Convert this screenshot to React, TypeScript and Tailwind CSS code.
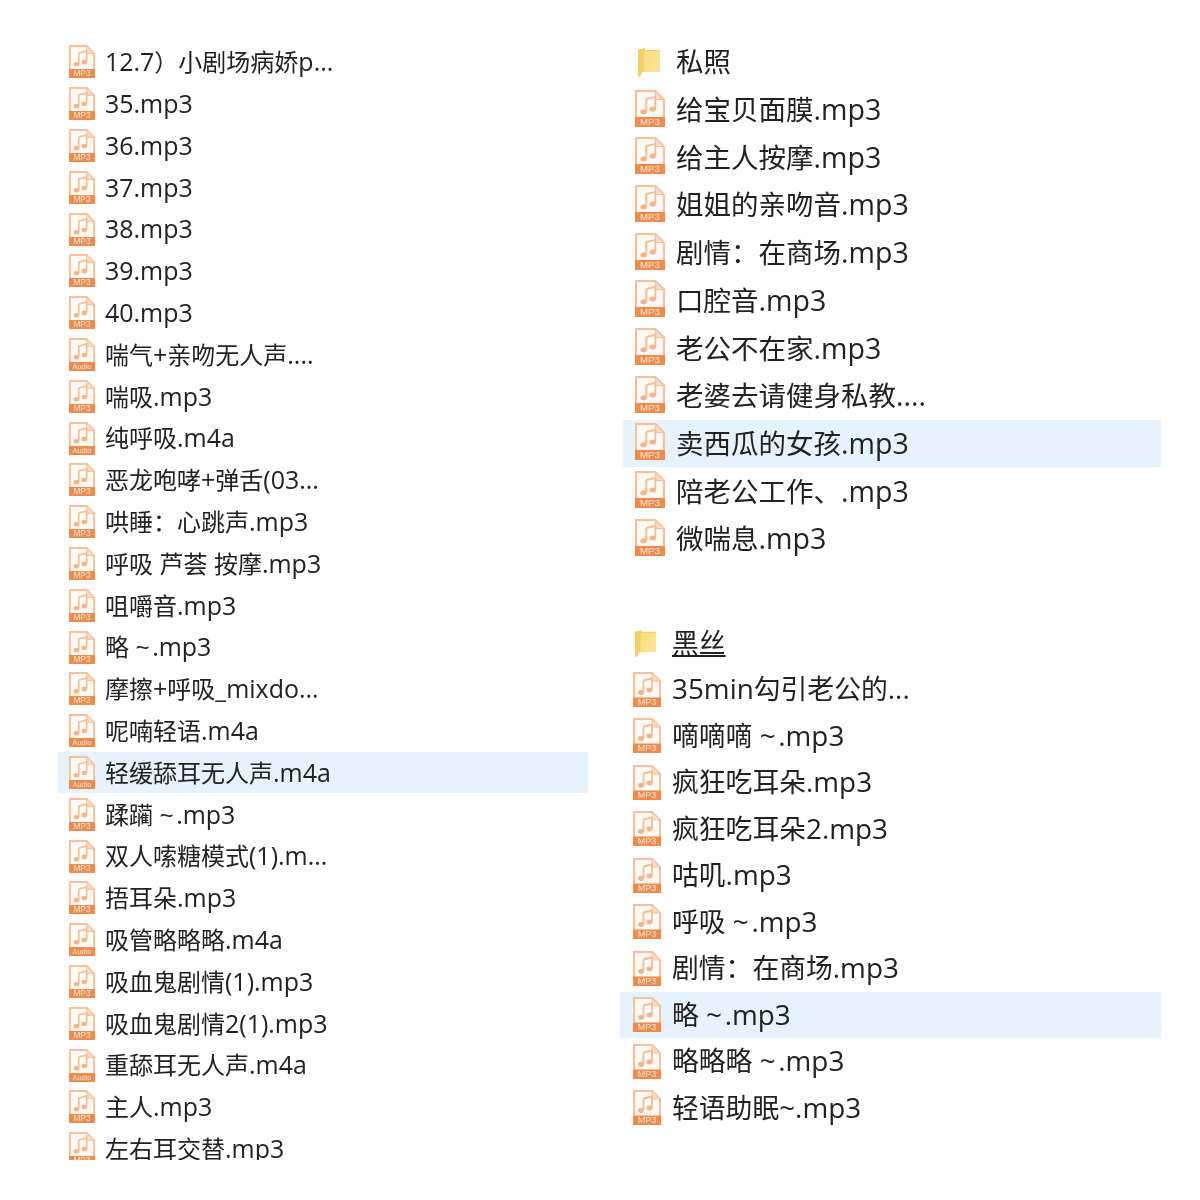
const leftFiles = [
  '12.7）小剧场病娇p...',
  '35.mp3',
  '36.mp3',
  '37.mp3',
  '38.mp3',
  '39.mp3',
  '40.mp3',
  '喘气+亲吻无人声....',
  '喘吸.mp3',
  '纯呼吸.m4a',
  '恶龙咆哮+弹舌(03...',
  '哄睡：心跳声.mp3',
  '呼吸 芦荟 按摩.mp3',
  '咀嚼音.mp3',
  '略 ~\u200a.mp3',
  '摩擦+呼吸_mixdo...',
  '呢喃轻语.m4a',
  '轻缓舔耳无人声.m4a',
  '蹂躏 ~\u200a.mp3',
  '双人嗦糖模式(1).m...',
  '捂耳朵.mp3',
  '吸管略略略.m4a',
  '吸血鬼剧情(1).mp3',
  '吸血鬼剧情2(1).mp3',
  '重舔耳无人声.m4a',
  '主人.mp3',
  '左右耳交替.mp3',
]

const privateFiles = [
  '给宝贝面膜.mp3',
  '给主人按摩.mp3',
  '姐姐的亲吻音.mp3',
  '剧情：在商场.mp3',
  '口腔音.mp3',
  '老公不在家.mp3',
  '老婆去请健身私教....',
  '卖西瓜的女孩.mp3',
  '陪老公工作、.mp3',
  '微喘息.mp3',
]

const silkFiles = [
  '35min勾引老公的...',
  '嘀嘀嘀 ~\u200a.mp3',
  '疯狂吃耳朵.mp3',
  '疯狂吃耳朵2.mp3',
  '咕叽.mp3',
  '呼吸 ~\u200a.mp3',
  '剧情：在商场.mp3',
  '略 ~\u200a.mp3',
  '略略略 ~\u200a.mp3',
  '轻语助眠~.mp3',
]

const fontStack = "font-['Open_Sans','Noto_Sans_CJK_SC',sans-serif]"

function AudioIcon({ className, label }: { className: string; label: string }) {
  return (
    <svg viewBox="0 0 28 35" className={className} preserveAspectRatio="none">
      <path d="M1 1H19L27 9V27H1Z" fill="#fffaf6" stroke="#f7c09a" strokeWidth="2" />
      <path d="M19 1V9H27Z" fill="#fbdcc4" stroke="#f7c09a" strokeWidth="1" />
      <path d="M10.5 8.5L19 6.5V17.5" fill="none" stroke="#f7bd95" strokeWidth="1.8" />
      <path d="M10.5 8.5V20" fill="none" stroke="#f7bd95" strokeWidth="1.8" />
      <ellipse cx="8" cy="20.5" rx="3" ry="2.4" fill="#f6b487" />
      <ellipse cx="16.5" cy="18" rx="3" ry="2.4" fill="#f6b487" />
      <rect x="0" y="25.5" width="28" height="9.5" fill="#f18a4a" />
      <text
        x="14"
        y="33.4"
        textAnchor="middle"
        fontSize={label === 'MP3' ? 9 : 8}
        fill="#ffe9da"
        fontFamily="Liberation Sans, sans-serif"
      >
        {label}
      </text>
    </svg>
  )
}

function FolderIcon({ className }: { className: string }) {
  return (
    <svg viewBox="0 0 23 30" className={className} preserveAspectRatio="none">
      <defs>
        <linearGradient id="folderFront" x1="0" y1="0" x2="1" y2="1">
          <stop offset="0" stopColor="#f9da78" />
          <stop offset="1" stopColor="#fbe69f" />
        </linearGradient>
      </defs>
      <path d="M1 3L8 1V3H22C22.6 3 23 3.4 23 4V24.5L5 25 3 30 1 29Z" fill="#f6cf62" />
      <path d="M7 4H23V24.5H5.5L3 29.5 7 22Z" fill="url(#folderFront)" />
    </svg>
  )
}

// latin runs sit a touch larger than the cjk ones in the original
function FileName({ name }: { name: string }) {
  return (
    <>
      {name.split(/([\x00-\x7f]+)/).map((part, i) =>
        i % 2 === 1 ? (
          <span key={i} className="text-[1.04em]">
            {part}
          </span>
        ) : (
          part
        ),
      )}
    </>
  )
}

function LeftRow({ name, selected }: { name: string; selected?: boolean }) {
  const label = name.endsWith('m4a') || name.startsWith('喘气') ? 'Audio' : 'MP3'
  return (
    <div className={selected ? 'flex h-[41.8px] items-center bg-[#e5f3ff] pl-[11px]' : 'flex h-[41.8px] items-center pl-[11px]'}>
      <AudioIcon className="h-[33px] w-[26px] shrink-0" label={label} />
      <span className="ml-[10px] whitespace-nowrap text-[24px] text-[#222]">
        <FileName name={name} />
      </span>
    </div>
  )
}

function PrivateRow({ name, selected }: { name: string; selected?: boolean }) {
  return (
    <div className={selected ? 'flex h-[47.7px] items-center bg-[#e5f3ff] pl-[12px]' : 'flex h-[47.7px] items-center pl-[12px]'}>
      <AudioIcon className="-mt-[3px] h-[37px] w-[30px] shrink-0" label="MP3" />
      <span className="ml-[11px] whitespace-nowrap text-[27.5px] text-[#222]">
        <FileName name={name} />
      </span>
    </div>
  )
}

function SilkRow({ name, selected }: { name: string; selected?: boolean }) {
  return (
    <div className={selected ? 'flex h-[46.5px] items-center bg-[#e5f3ff] pl-[13px]' : 'flex h-[46.5px] items-center pl-[13px]'}>
      <AudioIcon className="h-[35px] w-[28px] shrink-0" label="MP3" />
      <span className="ml-[11px] whitespace-nowrap text-[26.8px] text-[#222]">
        <FileName name={name} />
      </span>
    </div>
  )
}

export default function App() {
  return (
    <div className={`flex h-[1200px] w-[1200px] overflow-hidden bg-white blur-[0.4px] ${fontStack}`}>
      <div className="ml-[58px] mt-[41px] h-[1119px] w-[530px] overflow-hidden">
        {leftFiles.map((name, i) => (
          <LeftRow key={i} name={name} selected={i === 17} />
        ))}
      </div>

      <div className="ml-[32px] w-[541px] pt-[38px]">
        <div className="ml-[3px]">
          <div className="flex h-[47.7px] items-center pl-[14px]">
            <FolderIcon className="h-[30px] w-[23px] shrink-0" />
            <span className="ml-[16px] text-[27.5px] text-[#222]">私照</span>
          </div>
          {privateFiles.map((name, i) => (
            <PrivateRow key={i} name={name} selected={i === 7} />
          ))}
        </div>

        <div className="mt-[57px]">
          <div className="flex h-[46.5px] items-center pl-[14px]">
            <FolderIcon className="h-[28px] w-[22px] shrink-0" />
            <span className="ml-[16px] text-[26.8px] text-[#222] underline">黑丝</span>
          </div>
          {silkFiles.map((name, i) => (
            <SilkRow key={i} name={name} selected={i === 7} />
          ))}
        </div>
      </div>
    </div>
  )
}
